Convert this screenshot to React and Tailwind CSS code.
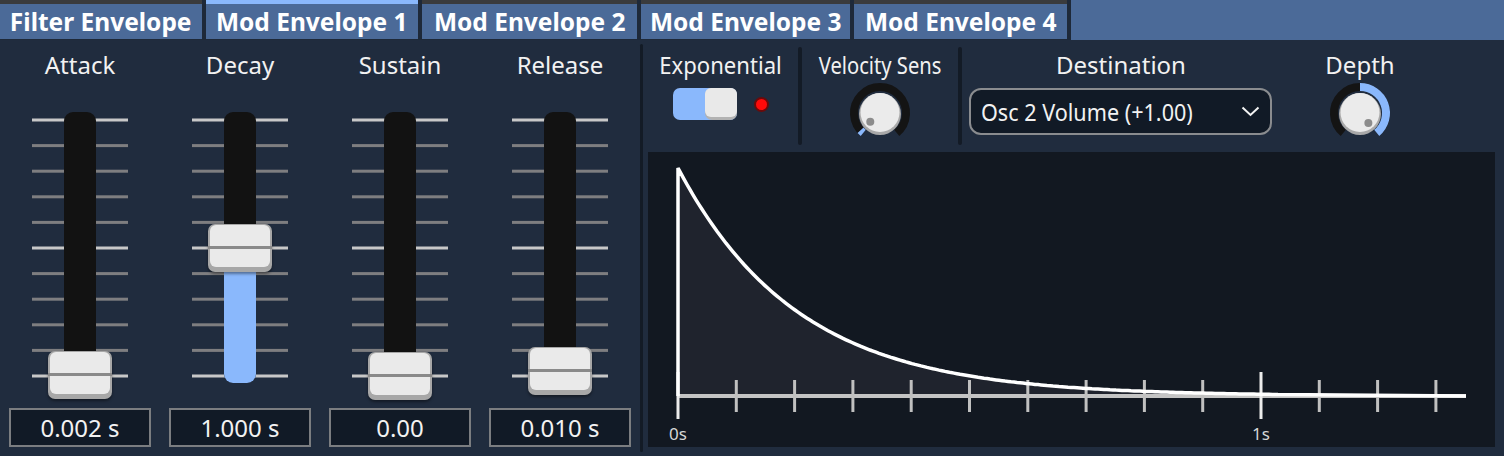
import React from 'react';

const tabs = [
  { name: 'Filter Envelope', w: 'w-[202px]', active: false },
  { name: 'Mod Envelope 1', w: 'w-[212px]', active: true },
  { name: 'Mod Envelope 2', w: 'w-[215px]', active: false },
  { name: 'Mod Envelope 3', w: 'w-[209px]', active: false },
  { name: 'Mod Envelope 4', w: 'w-[213px]', active: false },
];

const faders = [
  { label: 'Attack', value: '0.002 s', thumb: 'top-[270px]' },
  { label: 'Decay', value: '1.000 s', thumb: 'top-[143px]', fillTop: 167 },
  { label: 'Sustain', value: '0.00', thumb: 'top-[271px]' },
  { label: 'Release', value: '0.010 s', thumb: 'top-[266px]' },
];

function Tab({ name, w, active }) {
  return (
    <div className={`flex h-[40px] flex-col ${w}`}>
      <div className={`h-[4px] ${active ? 'bg-[#8ab8fc]' : 'bg-[#3a3b3d]'}`} />
      <div className="flex h-[35px] items-center justify-center bg-[#4b6a98] text-[25px] font-bold leading-none text-white">
        <span className="inline-block scale-x-[0.98]">{name}</span>
      </div>
    </div>
  );
}

function Fader({ label, value, thumb, fillTop }) {
  const ticks = Array.from({ length: 11 }, (_, i) => 39 + i * 25.6);
  return (
    <div className="flex w-[160px] flex-col items-center">
      <div className="h-[41px] pt-[9px] text-[24px] leading-[32px]">{label}</div>
      <div className="relative h-[325px] w-[160px]">
        <svg width="160" height="325" className="absolute left-0 top-0">
          {ticks.map((y, i) => (
            <rect key={i} x="32" y={y - 1.5} width="96" height="3" fill={i % 5 === 0 ? '#c8c8c8' : '#7e7e80'} />
          ))}
          <rect x="64" y="31" width="32" height="271" rx="9" fill="#121212" />
          {fillTop && <rect x="64" y={fillTop} width="32" height={302 - fillTop} rx="9" fill="#8ab8fc" />}
        </svg>
        {/* thumb sits over the track */}
        <div className={`absolute left-[48px] h-[48px] w-[64px] rounded-[7px] bg-[#a7a7a7] px-[2px] pb-[5px] pt-[1px] shadow-[0_2px_3px_rgba(0,0,0,0.4)] ${thumb}`}>
          <div className="relative h-full rounded-[6px] bg-[#eaeaea]">
            <div className="absolute left-[-2px] right-[-2px] top-[21px] h-[3px] bg-[#8a8a8a]" />
          </div>
        </div>
      </div>
      <div className="mt-[2px] flex h-[39px] w-[142px] items-center justify-center border-2 border-[#7b7d80] bg-[#111a26] text-[24px] leading-none">
        {value}
      </div>
    </div>
  );
}

function Knob({ value, bipolar }) {
  const cx = 32, cy = 32, r = 26;
  const pt = (a, rad) => [cx + rad * Math.sin((a * Math.PI) / 180), cy - rad * Math.cos((a * Math.PI) / 180)];
  const arc = (a0, a1) => {
    const [x0, y0] = pt(a0, r);
    const [x1, y1] = pt(a1, r);
    return `M${x0} ${y0} A${r} ${r} 0 ${a1 - a0 > 180 ? 1 : 0} 1 ${x1} ${y1}`;
  };
  const ang = -140 + 280 * value;
  const start = bipolar ? 0 : -140;
  const [dx, dy] = pt(ang, 13);
  return (
    <svg width="64" height="64" viewBox="0 0 64 64">
      <path d={arc(-140, 140)} stroke="#141414" strokeWidth="8" fill="none" />
      <path d={arc(Math.min(start, ang), Math.max(start, ang))} stroke="#8ab8fc" strokeWidth="8" fill="none" />
      <circle cx="32" cy="33" r="21" fill="#a9a9a9" />
      <circle cx="32" cy="31.5" r="19.5" fill="#ebebeb" />
      <circle cx={dx} cy={dy} r="4" fill="#8c8c8c" />
    </svg>
  );
}

function EnvelopeGraph() {
  const x0 = 30, y0 = 244, amp = 228, k = 120, step = 58.3;
  const pts = [];
  for (let d = 0; d <= 600; d += 3) pts.push(`${(x0 + d).toFixed(1)} ${(y0 - amp * Math.exp(-d / k)).toFixed(1)}`);
  const curve = `M${x0} ${y0} L${pts.join(' L')} L818 ${y0}`;
  const ticks = Array.from({ length: 14 }, (_, i) => i);
  return (
    <svg width="847" height="295" viewBox="0 0 847 295" className="block bg-[#121821]">
      <path d={`${curve} Z`} fill="#1f232d" />
      <line x1={x0} y1={y0} x2="818" y2={y0} stroke="#c4c4c4" strokeWidth="4" />
      {ticks.map((i) => {
        const major = i === 0 || i === 10;
        const x = x0 + i * step;
        return (
          <line key={i} x1={x} x2={x} y1={major ? 220 : 228} y2={major ? 267 : 260} stroke={major ? '#ececec' : '#c0c0c0'} strokeWidth="3" />
        );
      })}
      <path d={curve} fill="none" stroke="#ffffff" strokeWidth="3.5" strokeLinejoin="miter" />
      <text x={x0} y="288" textAnchor="middle" fontSize="17" fill="#d6d6d6" fontFamily="Noto Sans, sans-serif">0s</text>
      <text x={x0 + 10 * step} y="288" textAnchor="middle" fontSize="17" fill="#d6d6d6" fontFamily="Noto Sans, sans-serif">1s</text>
    </svg>
  );
}

function Sep() {
  return <div className="mt-[7px] h-[98px] w-[4px] rounded-full bg-[#131b26]" />;
}

export default function App() {
  return (
    <div className="flex h-[456px] w-[1504px] flex-col overflow-hidden bg-[#202c3e] font-['Noto_Sans',sans-serif] text-[#f2f2f2]">
      <div className="flex h-[40px] gap-[4px] bg-[#1e2939]">
        {tabs.map((t) => (
          <Tab key={t.name} {...t} />
        ))}
        <div className="flex-1 bg-[#4b6a98]" />
      </div>

      <div className="flex flex-1">
        <div className="flex w-[640px]">
          {faders.map((f) => (
            <Fader key={f.label} {...f} />
          ))}
        </div>
        <div className="my-[4px] w-[3px] rounded-full bg-[#131b26]" />

        <div className="flex flex-1 flex-col">
          <div className="flex h-[110px]">
            <div className="flex w-[155px] flex-col items-center">
              <div className="h-[41px] pt-[9px] text-[24px] leading-[32px]">
                <span className="inline-block scale-x-[0.92]">Exponential</span>
              </div>
              <div className="mt-[7px] flex items-center gap-[17px]">
                <div className="flex h-[32px] w-[64px] justify-end rounded-[7px] bg-[#8ab8fc]">
                  <div className="h-[32px] w-[32px] rounded-[7px] bg-[#b2b2b2] pb-[3px]">
                    <div className="h-full rounded-[6px] bg-[#e9e9e9]" />
                  </div>
                </div>
                <div className="h-[15px] w-[15px] rounded-full border-2 border-[#6b0a0a] bg-[#ff0a0a]" />
              </div>
            </div>
            <Sep />
            <div className="flex w-[156px] flex-col items-center">
              <div className="h-[41px] pt-[9px] text-[24px] leading-[32px]">
                <span className="inline-block scale-x-[0.84]">Velocity Sens</span>
              </div>
              <Knob value={0.03} />
            </div>
            <Sep />
            <div className="flex w-[318px] flex-col items-center">
              <div className="h-[41px] pt-[9px] text-[24px] leading-[32px]">Destination</div>
              <div className="mt-[7px] flex h-[47px] w-[303px] -translate-x-[1px] items-center justify-between rounded-[12px] border-2 border-[#8a8c8f] bg-[#111a26] pl-[10px] pr-[10px]">
                <span className="inline-block origin-left scale-x-[0.9] text-[24px] leading-none">Osc 2 Volume (+1.00)</span>
                <svg width="19" height="11" viewBox="0 0 19 11">
                  <path d="M1.5 1.5 L9.5 9 L17.5 1.5" fill="none" stroke="#f2f2f2" strokeWidth="2" />
                </svg>
              </div>
            </div>
            <div className="flex w-[160px] flex-col items-center">
              <div className="h-[41px] pt-[9px] text-[24px] leading-[32px]">Depth</div>
              <Knob value={1} bipolar />
            </div>
          </div>
          <div className="ml-[5px] mt-[2px] h-[295px] w-[847px]">
            <EnvelopeGraph />
          </div>
        </div>
      </div>
    </div>
  );
}
